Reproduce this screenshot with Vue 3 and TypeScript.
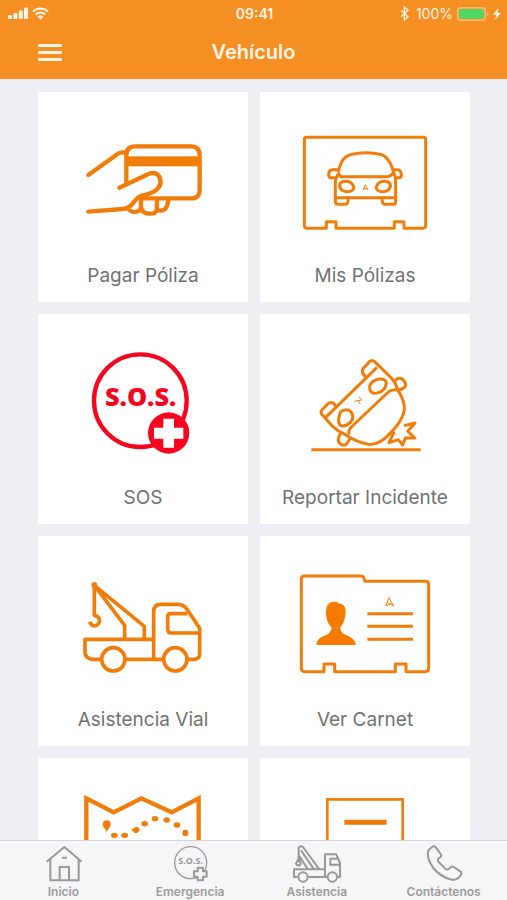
<script setup lang="ts">
interface Card {
  id: string
  label: string
  name: string
  box: string
}

interface Tab {
  id: string
  label: string
  box: string
}

const cards: Card[] = [
  { id: 'pay', label: 'Pagar Póliza', name: 'Pagar Póliza', box: '-7 -9 450 345' },
  { id: 'policies', label: 'Mis Pólizas', name: 'Mis Pólizas', box: '-1 6 450 345' },
  { id: 'sos', label: 'SOS', name: 'SOS', box: '-7 28 450 345' },
  { id: 'incident', label: 'Reportar Incidente', name: 'Reportar Incidente', box: '59 12 450 345' },
  { id: 'tow', label: 'Asistencia Vial', name: 'Asistencia Vial', box: '-7 18 450 345' },
  { id: 'card', label: 'Ver Carnet', name: 'Ver Carnet', box: '-1 18 450 345' },
  { id: 'map', label: '', name: 'Mapa', box: '113 130 450 345' },
  { id: 'document', label: '', name: 'Documento', box: '119 130 450 345' },
]

const tabs: Tab[] = [
  { id: 'home', label: 'Inicio', box: '25 30 150 120' },
  { id: 'emergency', label: 'Emergencia', box: '405 30 150 120' },
  { id: 'assistance', label: 'Asistencia', box: '36 30 150 120' },
  { id: 'contact', label: 'Contáctenos', box: '416 30 150 120' },
]
</script>

<template>
  <div class="screen">
    <header class="top">
      <div class="status">
        <div class="status-left">
          <svg class="signal" viewBox="0 0 20 13" aria-hidden="true">
            <rect x="0" y="8" width="4" height="4" rx="1" />
            <rect x="5.4" y="6" width="4" height="6" rx="1" />
            <rect x="10.8" y="3.5" width="4" height="8.5" rx="1" />
            <rect x="16" y="0.5" width="4" height="11.5" rx="1" />
          </svg>
          <svg class="wifi" viewBox="0 0 17 13" aria-hidden="true">
            <path d="M1 4.6a10.6 10.6 0 0 1 15 0M3.700 7.600a6.800 6.800 0 0 1 9.600 0" />
            <path class="solid" d="M5.600 9.700a4.200 4.200 0 0 1 5.800 0L8.500 12.600z" />
          </svg>
        </div>
        <div class="time">09:41</div>
        <div class="status-right">
          <svg class="bluetooth" viewBox="0 0 9 15" aria-hidden="true">
            <path d="M1 4.300l7 6.400-3.600 3.300V1L8 4.300 1 10.700" />
          </svg>
          <span class="percent">100%</span>
          <svg class="battery" viewBox="0 0 32 14" aria-hidden="true">
            <rect class="shell" x="0.8" y="0.8" width="27.4" height="12.4" rx="2.5" />
            <rect class="charge" x="2.3" y="2.3" width="24.4" height="9.4" rx="1" />
            <path class="cap" d="M30 5v4q1.500-.5 1.500-2T30 5z" />
          </svg>
          <svg class="bolt" viewBox="0 0 8 12" aria-hidden="true">
            <path d="M5.500 0L0 6.800h3.400L2.200 12 8 4.800H4.500z" />
          </svg>
        </div>
      </div>
      <div class="bar">
        <button class="menu" type="button" aria-label="Menú">
          <span></span><span></span><span></span>
        </button>
        <h1>Vehículo</h1>
      </div>
    </header>

    <main class="content">
      <div class="grid">
        <a v-for="card in cards" :key="card.id" class="card" href="#" :aria-label="card.name">
          <svg class="icon" :viewBox="card.box" aria-hidden="true">
            <g v-if="card.id === 'pay'" class="line bold">
              <path d="M54 135L145 70Q151 65 168 68" />
              <path d="M168 156V76Q168 49 195 49H362Q388 49 388 76V179Q388 205 362 205H207" />
              <path class="fill" d="M168 80H388V108H168z" />
              <path d="M147 173L230 134Q256 121 268 142Q278 167 252 184Q239 192 213 197Q202 201 193 213Q178 236 157 237L54 245" />
              <path d="M174 237Q183 248 199 245Q212 243 212 232V209M212 234Q218 251 238 251Q260 251 260 236V209M260 240Q290 250 294 209" />
            </g>

            <g v-else-if="card.id === 'policies'" class="line">
              <path d="M49 37H400Q406 37 406 43V301Q406 310 397 310H341V290H312V310H137V290H108V310H51Q42 310 42 301V43Q42 37 49 37z" />
              <path d="M143 141C153 107 159 97 180 89Q226 77 274 89C294 97 302 116 312 147Q316 157 316 178V230Q316 238 307 238H283Q275 237 275 218H174Q174 238 165 238H143Q135 238 135 229V178Q135 157 145 146Q149 158 160 155H292Q304 152 309 143" />
              <path d="M138 158H122Q115 158 115 149Q115 134 127 134H146M313 158H327Q334 158 333 148Q331 134 321 134H307M135 218H174M275 218H316" />
              <path d="M149 175Q156 168 169 169Q186 171 191 188Q187 201 170 200Q143 196 149 175zM299 175Q292 168 279 169Q262 171 257 188Q261 201 278 200Q305 196 299 175z" />
              <path class="thin" d="M218 196L225 179L233 196M221 190L230 192" />
            </g>

            <g v-else-if="card.id === 'sos'" class="sos">
              <circle cx="210" cy="183" r="139" />
              <text x="211" y="200" text-anchor="middle">S.O.S.</text>
              <circle class="disc" cx="295" cy="280" r="62" />
              <path class="cross" d="M279 237H311V264H339V297H311V324H279V297H251V264H279z" />
            </g>

            <g v-else-if="card.id === 'incident'" class="line">
              <path class="medium" d="M123 314H451" />
              <path d="M294 98Q283 96 277 84Q274 75 281 68L297 50Q304 43 313 50L363 99Q377 114 382 134Q404 168 402 195Q396 230 359 265Q329 301 293 298Q257 291 222 267Q204 260 188 245L157 211Q148 202 155 195L172 177Q180 169 190 175L199 187" />
              <path d="M166 217L320 67M237 268Q232 258 243 246L354 141Q365 132 382 135" />
              <path d="M374 109Q380 97 393 101Q406 108 406 121Q401 133 382 135M212 264Q201 278 205 292Q215 304 227 299L241 279" />
              <path d="M298 122Q306 105 326 102Q346 101 348 113Q346 137 324 143Q296 151 298 122zM210 202Q221 191 237 196Q251 207 246 224Q234 243 216 243Q197 239 210 202z" />
              <path class="thin" d="M252 169L274 165L266 156M263 167L270 177" />
              <path d="M372 259L356 293L384 284L397 300L405 279L434 279L412 259L434 234L401 242" />
            </g>

            <g v-else-if="card.id === 'tow'" class="line truck">
              <path d="M93 283H67Q44 281 44 260V223H250V283H165M250 283H280M352 283H370Q388 283 388 266V190L351 134Q340 118 323 118H272Q250 118 250 140V223" />
              <path d="M351 146H302Q292 146 292 156V191Q292 204 303 204H388" />
              <path d="M163 223V181L72 61L222 184V223" />
              <path d="M72 61V151Q88 154 88 169Q84 182 72 183Q61 181 58 170" />
              <circle cx="129" cy="283" r="35" />
              <circle cx="315" cy="283" r="35" />
              <circle class="fill" cx="72" cy="60" r="8" />
            </g>

            <g v-else-if="card.id === 'card'" class="line">
              <path d="M42 33H212Q219 33 221 40L224 49H406Q415 49 415 58V310Q415 320 405 320H347V297H315V320H133V297H101V320H43Q33 320 33 310V42Q33 33 42 33z" />
              <path class="person" d="M78 240Q79 222 98 214Q124 205 124 188Q111 176 109 160Q104 142 109 125Q114 112 130 110L140 111L144 115Q166 117 166 138Q166 169 150 187Q149 204 167 210Q194 220 197 240z" />
              <path class="medium" d="M231 146H368M231 184H368M231 223H368" />
              <path class="thin" d="M286 123L296 98L310 123L300 117L286 123M292 113L302 117" />
            </g>

            <g v-else-if="card.id === 'map'">
              <path class="line map" d="M168 500V146L250 188L333 146L424 188L505 146V500" />
              <path class="solid" d="M229 247C222 235 217 231 217 224A12 12 0 0 1 241 224C241 231 236 235 229 247z" />
              <g class="solid">
                <ellipse cx="252" cy="257" rx="10" ry="8" />
                <ellipse cx="283" cy="257" rx="10" ry="8" />
                <path d="M302 241L316 232Q328 231 328 241Q324 251 314 251L308 245z" />
                <ellipse cx="343" cy="222" rx="10" ry="8" />
                <ellipse cx="374" cy="207" rx="10" ry="8" />
                <ellipse cx="409" cy="211" rx="10" ry="8" />
                <ellipse cx="440" cy="226" rx="10" ry="8" />
                <ellipse cx="465" cy="250" rx="9" ry="10" />
              </g>
            </g>

            <g v-else class="line">
              <path class="sheet" d="M231 500V149H457V500H231" />
              <path class="dash" d="M282 218H409" />
            </g>
          </svg>
          <span v-if="card.label" class="label">{{ card.label }}</span>
        </a>
      </div>
    </main>

    <nav class="tabs">
      <a v-for="tab in tabs" :key="tab.id" class="tab" href="#">
        <svg :viewBox="tab.box" aria-hidden="true">
          <g v-if="tab.id === 'home'">
            <path d="M51 80L104 36L156 80M62 74V136H147V74M90 136V96H118V136M97 68H112" />
          </g>
          <g v-else-if="tab.id === 'emergency'">
            <circle class="fine" cx="482" cy="83" r="48" />
            <text x="482" y="88" text-anchor="middle">S.O.S.</text>
            <path class="plus" d="M503 98H519V109H530V125H519V136H503V125H492V109H503z" />
          </g>
          <g v-else-if="tab.id === 'assistance'">
            <path d="M52 126H42V103H135V126H85M135 126H141M173 126H180V84L169 58H135V103M177 71H151V89H180" />
            <path d="M84 103L59 65V80M118 103L69 36Q61 31 56 38V79Q66 83 60 91Q50 93 48 85L55 73M102 103L63 46" />
            <circle cx="69" cy="126" r="14" />
            <circle cx="157" cy="126" r="14" />
          </g>
          <g v-else>
            <path d="M447 43L456 35Q462 31 467 38L481 57Q485 62 480 67Q469 73 474 80L495 101Q502 107 508 99Q514 92 520 96L540 109Q546 114 541 121L533 130Q524 137 510 133Q480 125 459 99Q439 71 443 49z" />
          </g>
        </svg>
        <span>{{ tab.label }}</span>
      </a>
    </nav>
  </div>
</template>

<style>
body {
  margin: 0;
  background: #efeef4;
}
</style>

<style scoped>
.screen {
  display: flex;
  flex-direction: column;
  height: 100vh;
  overflow: hidden;
  background: #efeef4;
  font-family: Inter, "Liberation Sans", sans-serif;
}

.top {
  flex: none;
  padding-bottom: 2px;
  background: #f58f23;
  color: #fff5e4;
}

.status {
  display: grid;
  grid-template-columns: 1fr auto 1fr;
  align-items: center;
  height: 27px;
  padding: 0 6px 0 8px;
  font-size: 14px;
}

.status-left,
.status-right {
  display: flex;
  align-items: center;
  gap: 4px;
}

.status-right {
  justify-content: flex-end;
}

.status svg {
  fill: #fff5e4;
}

.signal {
  width: 20px;
  height: 13px;
}

.wifi {
  width: 17px;
  height: 13px;
}

.status .wifi path {
  fill: none;
  stroke: #fff5e4;
  stroke-width: 2;
}

.status .wifi .solid {
  fill: #fff5e4;
  stroke: none;
}

.time {
  font-weight: 600;
}

.status .bluetooth {
  width: 9px;
  height: 15px;
  margin-right: 3px;
  fill: none;
  stroke: #fff5e4;
  stroke-width: 1.3;
}

.battery {
  width: 32px;
  height: 14px;
}

.battery .shell {
  fill: none;
  stroke: #fbc98f;
  stroke-width: 1.2;
}

.battery .charge {
  fill: #4cd964;
}

.battery .cap {
  fill: #fbc98f;
}

.bolt {
  width: 8px;
  height: 12px;
}

.bar {
  display: grid;
  grid-template-columns: 1fr auto 1fr;
  align-items: center;
  height: 50px;
  padding: 0 38px;
}

.menu {
  display: flex;
  flex-direction: column;
  gap: 4px;
  width: 24px;
  padding: 0;
  border: 0;
  background: none;
}

.menu span {
  height: 3px;
  border-radius: 1px;
  background: #fff5e4;
}

h1 {
  margin: 0;
  font-size: 20px;
  font-weight: 600;
  line-height: 24px;
}

.content {
  flex: 1;
  min-height: 0;
  overflow-y: auto;
  scrollbar-width: none;
}

.grid {
  display: grid;
  grid-template-columns: 1fr 1fr;
  gap: 12px;
  padding: 13px 37px 13px 38px;
}

.card {
  display: flex;
  flex-direction: column;
  align-items: center;
  box-sizing: border-box;
  aspect-ratio: 1;
  padding-top: 35px;
  background: #fff;
  color: #717173;
  text-decoration: none;
}

.icon {
  flex: none;
  width: 150px;
  height: 115px;
}

.label {
  margin-top: 22px;
  font-size: 19px;
  line-height: 24px;
  white-space: nowrap;
}

.line {
  fill: none;
  stroke: #f07d0a;
  stroke-width: 9;
  stroke-linejoin: round;
}

.bold {
  stroke-width: 13;
  stroke-linecap: round;
}

.bold .fill,
.truck .fill {
  fill: #f07d0a;
  stroke-width: 2;
}

.truck {
  stroke-width: 11;
}

.thin {
  stroke-width: 3;
}

.medium {
  stroke-width: 9;
}

.person {
  fill: #f57c00;
  stroke: none;
}

.map {
  stroke-width: 13;
  stroke-linejoin: miter;
}

.icon .solid {
  fill: #f07d0a;
}

.sheet {
  stroke-width: 8;
  stroke-linejoin: miter;
}

.dash {
  stroke-width: 15;
}

.sos circle {
  fill: none;
  stroke: #f5061f;
  stroke-width: 13;
}

.sos text {
  fill: #f5061f;
  font-family: "Open Sans", "Noto Sans", sans-serif;
  font-size: 76px;
  font-weight: 800;
}

.sos .disc {
  fill: #f5061f;
  stroke: none;
}

.sos .cross {
  fill: #fff;
}

.tabs {
  display: grid;
  grid-template-columns: repeat(4, 1fr);
  flex: none;
  height: 59px;
  border-top: 1px solid #d3d3d8;
  background: #f6f6f8;
}

.tab {
  display: flex;
  flex-direction: column;
  align-items: center;
  padding-top: 4px;
  color: #9a9a9c;
  font-size: 12px;
  font-weight: 600;
  line-height: 14px;
  text-decoration: none;
}

.tab svg {
  width: 50px;
  height: 40px;
  fill: none;
  stroke: #98989a;
  stroke-width: 6;
  stroke-linejoin: round;
}

.tab .fine {
  stroke-width: 4;
}

.tab .plus {
  fill: #f6f6f8;
  stroke-width: 6;
}

.tab text {
  fill: #98989a;
  stroke: none;
  font-family: "Open Sans", "Noto Sans", sans-serif;
  font-size: 27px;
  font-weight: 700;
}
</style>
